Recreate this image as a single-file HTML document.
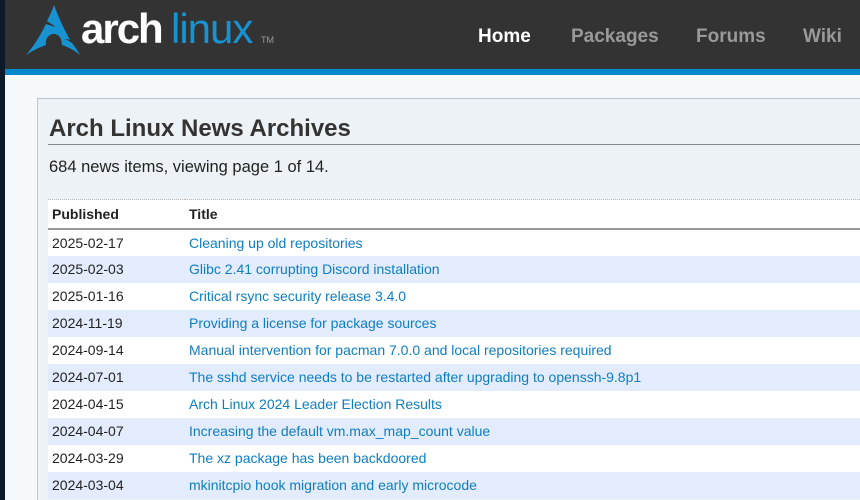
<!DOCTYPE html>
<html><head><meta charset="utf-8"><style>
*{margin:0;padding:0;box-sizing:border-box}
html{width:860px;height:500px;overflow:hidden}
body{width:860px;height:500px;overflow:hidden;background:#0d1a2a;font-family:"Liberation Sans","DejaVu Sans",sans-serif;position:relative}
#page{position:absolute;left:5px;top:0;width:855px;height:500px;background:#f6f9fc;overflow:hidden}
#hdr{position:absolute;left:0;top:0;width:855px;height:69px;background:#333}
#bar{position:absolute;left:0;top:69px;width:855px;height:6px;background:#0088cc}
.nav{position:absolute;top:26px;font-weight:bold;font-size:19px;color:#999}
#box{position:absolute;left:32px;top:98px;width:840px;height:420px;background:#ecf2f5;border:1px solid #bcc6d0}
h2{position:absolute;left:11px;top:16px;font-size:24px;color:#333;font-weight:bold}
#hr{position:absolute;left:10px;top:45px;width:830px;border-top:1px solid #888}
#cnt{position:absolute;left:11px;top:59px;font-size:16.5px;color:#222}
table{position:absolute;left:10px;top:100px;width:830px;border-collapse:collapse;font-size:14px;border-top:1px dotted #bbb}
td,th{text-align:left;height:27px;padding:0 4px;color:#222}
th{font-weight:bold;font-size:14px;border-bottom:2px solid #999;background:#fff;height:29px}
td:first-child,th:first-child{width:137px}
td a{color:#0e7dc2;text-decoration:none}
tr:nth-child(odd) td{background:#e3ecfc}
tr:nth-child(even) td{background:#fff}
</style></head><body>
<div id="page">
<div id="hdr">
<svg style="position:absolute;left:20px;top:4px" width="58" height="52" viewBox="0 0 58 52"><path d="M29 1 C27 7 25 11 22 17 C26 20 29 21 30 23 C27 22 24 21 21 20 C15 32 9 42 1 51 C9 46 15 43 21 41 C20 34 24 30 29 30 C34 30 37 35 37 41 C43 43 49 46 55 51 C53 47 50 43 47 39 C44 37 41 35 39 35 C41 35 43 35 45 36 C38 23 33 12 29 1Z" fill="#1793d1"/></svg>
<div style="position:absolute;left:76px;top:5px;font-size:42px;font-weight:bold;color:#fff;letter-spacing:-2px">arch</div>
<div style="position:absolute;left:166px;top:5px;font-size:42px;color:#1793d1;letter-spacing:-1px">linux</div>
<div style="position:absolute;left:256px;top:35px;font-size:9px;color:#999">TM</div>
<div class="nav" style="left:473px;color:#fff">Home</div>
<div class="nav" style="left:566px">Packages</div>
<div class="nav" style="left:691px">Forums</div>
<div class="nav" style="left:798px">Wiki</div>
</div>
<div id="bar"></div>
<div id="box">
<h2>Arch Linux News Archives</h2>
<div id="hr"></div>
<div id="cnt">684 news items, viewing page 1 of 14.</div>
<table>
<tr><th>Published</th><th>Title</th></tr>
<tr><td>2025-02-17</td><td><a>Cleaning up old repositories</a></td></tr>
<tr><td>2025-02-03</td><td><a>Glibc 2.41 corrupting Discord installation</a></td></tr>
<tr><td>2025-01-16</td><td><a>Critical rsync security release 3.4.0</a></td></tr>
<tr><td>2024-11-19</td><td><a>Providing a license for package sources</a></td></tr>
<tr><td>2024-09-14</td><td><a>Manual intervention for pacman 7.0.0 and local repositories required</a></td></tr>
<tr><td>2024-07-01</td><td><a>The sshd service needs to be restarted after upgrading to openssh-9.8p1</a></td></tr>
<tr><td>2024-04-15</td><td><a>Arch Linux 2024 Leader Election Results</a></td></tr>
<tr><td>2024-04-07</td><td><a>Increasing the default vm.max_map_count value</a></td></tr>
<tr><td>2024-03-29</td><td><a>The xz package has been backdoored</a></td></tr>
<tr><td>2024-03-04</td><td><a>mkinitcpio hook migration and early microcode</a></td></tr>
</table>
</div>
</div>
</body></html>
